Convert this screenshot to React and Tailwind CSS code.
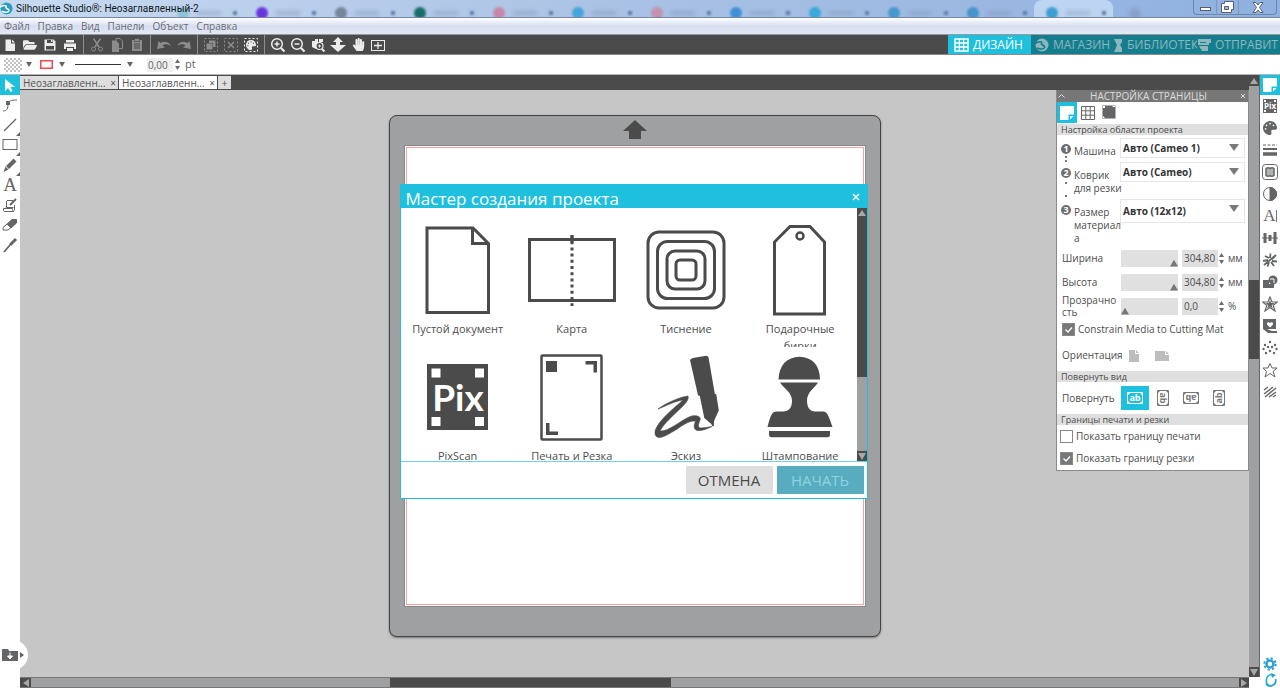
import React from 'react';
import { FaPalette, FaHandPaper, FaFolderOpen } from 'react-icons/fa';

function Svg({ w = 16, h = 16, children, className = '' }) {
  return (
    <svg width={w} height={h} viewBox={`0 0 ${w} ${h}`} fill="none" stroke="currentColor" className={`block shrink-0 ${className}`} aria-hidden="true">
      {children}
    </svg>
  );
}

function Solid({ d, w = 16, h = 16, className = '' }) {
  return (
    <Svg w={w} h={h} className={className}>
      <path d={d} fill="currentColor" stroke="none" />
    </Svg>
  );
}

const Logo = ({ size = 13, cut = '#fff' }) => (
  <svg width={size} height={size} viewBox="0 0 14 14" className="block shrink-0" aria-hidden="true">
    <circle cx="7" cy="7" r="6.500" fill="currentColor" />
    <path d="M0 5.500C4 3 7.500 3.500 6.500 5.500 5.800 7.500 10.500 7 9.500 9.500 8.500 11.500 5 11.500 2 10" fill="none" stroke={cut} strokeWidth="1.600" />
  </svg>
);

const pageIcon = 'M1 1h14v8.500H9.500V15H1zM11 11h3.500L11 14.500z';

const browserTabs = [
  'bg-[#4aa8b4]', 'bg-[#6a35dd]', 'bg-[#76869c]', 'bg-[#176f68]', 'bg-[#c887a8]', 'bg-[#45a5da]',
  'bg-[#c392ae]', 'bg-[#3d91d3]', 'bg-[#3ba9dc]', 'bg-[#4697cf]', 'bg-[#4694cb]', 'bg-[#3d9ed4]',
];

function TitleBar() {
  return (
    <header className="relative flex h-[18px] shrink-0 items-center justify-between overflow-hidden border-b border-[#75859f] bg-linear-to-r from-[#c7daf1] via-[#a9c1e4] to-[#8fb0e0]">
      <div className="absolute inset-0 flex overflow-hidden pl-[165px]" aria-hidden="true">
        {browserTabs.map((c, i) => (
          <div key={i} className={`flex w-[79px] shrink-0 items-center gap-2 rounded-t-lg pt-2 pl-3 ${i === 11 ? 'bg-[#bdd5f2]' : ''}`}>
            <i className={`size-3 rounded-full blur-[1px] ${c} ${i === 0 ? 'opacity-40' : ''}`} />
            <i className="h-1 w-6 bg-[#7d94b5]/50 blur-[2px]" />
            <i className="ml-1 size-1 bg-[#5f7da8] blur-[1px]" />
          </div>
        ))}
        <i className="mt-2 ml-4 size-3 rounded-full bg-[#86a0c8] blur-[2px]" />
      </div>
      <h1 className="relative flex items-center gap-[3px] font-[Roboto,sans-serif] text-[10px] leading-4 text-[#101820]">
        <span className="text-[#2a9cc0]"><Logo /></span>
        <span>Silhouette Studio®: Неозаглавленный-2</span>
      </h1>
      <div className="relative mr-[3px] flex h-[15px] self-start overflow-hidden rounded-b border border-t-0 border-[#6f86ab] text-[#58606e]">
        <button aria-label="Свернуть" className="flex w-[23px] items-center justify-center border-r border-[#7d95bb]">
          <Svg w={13} h={10}><rect x="1.500" y="5.500" width="10" height="3" fill="#fff" /></Svg>
        </button>
        <button aria-label="Развернуть" className="flex w-[22px] items-center justify-center border-r border-[#7d95bb]">
          <Svg w={13} h={12}><path d="M3.500.5h9v8h-2v3h-10v-9h3z" fill="#fff" /><path d="M3.500 5.500h4v3h-4z" fill="#9ab8e2" /></Svg>
        </button>
        <button aria-label="Закрыть окно" className="flex w-[37px] items-center justify-center">
          <Svg w={12} h={11}><path d="M1 .5h3l2 2.500 2-2.500h3L7.500 5.500l3.500 5H8L6 8l-2 2.500H1l3.500-5z" fill="#fff" /></Svg>
        </button>
      </div>
    </header>
  );
}

function MenuBar() {
  return (
    <nav className="flex h-[17px] shrink-0 items-center gap-2 border-b border-[#9a9a9a] bg-linear-to-b from-white via-[#d7def0] to-[#e3e8f6] pl-1 text-[10px] leading-4 text-[#6a6c72]">
      {['Файл', 'Правка', 'Вид', 'Панели', 'Объект', 'Справка'].map((m) => (
        <button key={m}>{m}</button>
      ))}
    </nav>
  );
}

const sel = <rect x="1.500" y="1.500" width="13" height="13" strokeDasharray="2 2" />;

const toolGroups = [
  [
    ['Новый', <Solid d="M3.500 2.500h5.500v4h4v7.500h-9.500zM10 2.500l3 3h-3z" />],
    ['Открыть', <FaFolderOpen size={14} />],
    ['Сохранить', <Svg><path d="M2.500 2.500h9l2 2v9h-11z" fill="currentColor" stroke="none" /><path d="M5 3h6v3H5zM4 9h8v3.500H4z" fill="#4a4b4a" stroke="none" /><path d="M9 3h1.500v2H9z" fill="currentColor" stroke="none" /></Svg>],
    ['Печать', <Svg><path d="M4 3h8v2.500H4zM2 6.500h12V12h-2v-2H4v2H2zM5 11h6v3H5z" fill="currentColor" stroke="none" /></Svg>],
  ],
  [
    ['Вырезать', <Svg><path d="M4.500 1.500 10 10M11.500 1.500 6 10" strokeWidth="1.500" /><circle cx="4.500" cy="12" r="2" /><circle cx="11.500" cy="12" r="2" /></Svg>, 1],
    ['Копировать', <Svg><path d="M7 1.500h4l2.500 2.500v7.500H7z" /><path d="M3 3.500h4l3 3V15H3z" fill="currentColor" stroke="none" /></Svg>, 1],
    ['Вставить', <Svg><path d="M3 3h10v11H3z" fill="currentColor" stroke="none" /><path d="M5.500 1.500h5v3h-5z" fill="currentColor" stroke="#4a4b4a" strokeWidth=".7" /><path d="M5 7h6M5 9h6M5 11h6" stroke="#4a4b4a" /></Svg>, 1],
  ],
  [
    ['Отменить', <Solid d="M1 12 2.500 4l2 2C8 3.500 13 4.500 15 9 11.500 6.500 8.500 7 6.500 8.500l2.500 2z" />, 1],
    ['Повторить', <Solid d="M15 12 13.500 4l-2 2C8 3.500 3 4.500 1 9c3.500-2.500 6.500-2 8.500-.5l-2.500 2z" />, 1],
  ],
  [
    ['Выделить всё', <Svg>{sel}<path d="M6 3.500h6.500V10H10V6H6z M3.500 6.500h6v6h-6z" fill="currentColor" stroke="none" /></Svg>, 1],
    ['Снять выделение', <Svg>{sel}<path d="m5 5 6 6m0-6-6 6" strokeWidth="1.500" /></Svg>, 1],
    ['Выбрать по цвету', <span className="relative block"><Svg>{sel}</Svg><FaPalette size={10} className="absolute top-[3px] left-[3px]" /></span>],
  ],
  [
    ['Увеличить', <Svg><circle cx="7" cy="7" r="5.300" strokeWidth="1.500" /><path d="m11 11 3.500 3.500" strokeWidth="2.200" /><path d="M4.500 7h5M7 4.500v5" strokeWidth="1.500" /></Svg>],
    ['Уменьшить', <Svg><circle cx="7" cy="7" r="5.300" strokeWidth="1.500" /><path d="m11 11 3.500 3.500" strokeWidth="2.200" /><path d="M4.500 7h5" strokeWidth="1.500" /></Svg>],
    ['Масштаб выделения', <Svg><path d="M2 4h3V2h3v6L6 12l-4-2zM9 2h4v3H9z" fill="currentColor" stroke="none" /><circle cx="9.500" cy="9" r="3.500" fill="#4a4b4a" strokeWidth="1.200" /><path d="M8 9h3M9.500 7.500v3" /><path d="m12 12 2.500 2.500" strokeWidth="2" /></Svg>],
    ['Масштаб перетаскиванием', <Solid d="M8 0l5 5h-3v3h6l-8 7-8-7h6V5H3z" />],
    ['Панорамирование', <FaHandPaper size={13} />],
    ['Вписать в окно', <Svg><rect x="1.500" y="3.500" width="13" height="10" /><path d="M4 8.500h8M8 5v7" strokeWidth="1.300" /></Svg>],
  ],
];

function ToolBar() {
  const modes = [
    ['МАГАЗИН', <Logo size={14} cut="#147e8e" />],
    ['БИБЛИОТЕК', <Solid w={9} h={14} d="M0 1h8v3l-2 3 2 3v4H0l3-7z" />],
    ['ОТПРАВИТ', <Solid w={14} h={13} d="M1 1h13v4h-2v2H1zM3 4v1h6V4zM2 8h9v5H5z" />],
  ];
  return (
    <div className="flex h-5 shrink-0 items-center justify-between border-b border-[#8b8b8b] bg-[#4a4b4a]">
      <div className="flex h-full items-center">
        {toolGroups.map((g, gi) => (
          <React.Fragment key={gi}>
            {gi > 0 && <i className="mx-[3px] h-full w-px bg-[#8d8e8d]" />}
            {g.map(([name, icon, dim]) => (
              <button key={name} aria-label={name} className={`flex size-5 items-center justify-center ${dim ? 'text-[#8b8c8b]' : 'text-[#ececec]'}`}>
                {icon}
              </button>
            ))}
          </React.Fragment>
        ))}
      </div>
      <div className="flex h-full text-[12px] leading-5">
        <button className="flex w-[83px] items-center gap-1 bg-[#1fc0de] pl-[6px] text-white">
          <Svg w={15} h={14}><rect x="1" y="1" width="13" height="12" strokeWidth="1.500" /><path d="M5.300 1v12M9.600 1v12M1 5h13M1 9h13" strokeWidth="1.300" /></Svg>
          ДИЗАЙН
        </button>
        {modes.map(([name, icon]) => (
          <button key={name} className="flex w-[83px] items-center gap-1 bg-[#147e8e] pl-1 text-[#8db6bd] nth-[n+3]:pl-0">
            {icon}
            <span>{name}</span>
          </button>
        ))}
      </div>
    </div>
  );
}

const Down = ({ className = 'text-[#666]' }) => <Solid w={6} h={5} d="M0 0h6L3 5z" className={className} />;

function Spinner({ label }) {
  return (
    <span className="flex flex-col gap-[3px] text-[#6a6a6a]">
      <button aria-label={`${label}: больше`}><Solid w={5} h={4} d="M0 4h5L2.500 0z" /></button>
      <button aria-label={`${label}: меньше`}><Solid w={5} h={4} d="M0 0h5L2.500 4z" /></button>
    </span>
  );
}

function OptionBar() {
  return (
    <div className="flex h-5 shrink-0 items-center border-b border-[#b5b5b5] bg-white pl-1 text-[11px] text-[#666]">
      <button aria-label="Заливка" className="flex items-center gap-1">
        <Svg w={18} h={14}>
          <path d="M0 4l4-4M0 8l8-8M0 12 12 0M2 14 16 0M6 14 18 2M10 14l8-8M14 14l4-4M0 10l4 4M0 6l8 8M0 2l12 12M2 0l14 14M6 0l12 12M10 0l8 8M14 0l4 4" stroke="#b0b0b0" strokeWidth=".8" />
        </Svg>
        <Down />
      </button>
      <button aria-label="Цвет линии" className="ml-2 flex items-center gap-[6px]">
        <Svg w={13} h={9}><rect x=".75" y=".75" width="11.500" height="7.500" stroke="#f04a4a" strokeWidth="1.500" /></Svg>
        <Down />
      </button>
      <button aria-label="Стиль линии" className="ml-[10px] flex items-center gap-[6px]">
        <i className="h-px w-[46px] bg-[#333]" />
        <Down />
      </button>
      <input aria-label="Толщина линии" defaultValue="0,00" className="mr-[2px] ml-[14px] h-[14px] w-[26px] bg-[#efefef] pl-px text-[10px] leading-4 outline-none" />
      <Spinner label="Толщина" />
      <span className="ml-[5px]">pt</span>
    </div>
  );
}

const leftTools = [
  ['Выбор', <Solid d="M3 2v12l3-3 2.500 4 2-1-2-4H13z" />],
  ['Правка узлов', <Svg><path d="M1 14c4 0 5-2 5-8 2-3 5-3 9-3" /><rect x="4" y="4" width="4" height="4" fill="currentColor" stroke="none" /></Svg>],
  ['Линия', <Svg><path d="m2 14 12-12" strokeWidth="1.200" /></Svg>, 1],
  ['Прямоугольник', <Svg><rect x="1" y="2.500" width="14" height="10" /></Svg>, 1],
  ['Карандаш', <Solid d="M11.500 1.500l3 3L7 12l-3-3zM3.500 9.500l3 3L1.500 15z" />, 1],
  ['Текст', <span className="font-['Liberation_Serif',serif] text-[19px] leading-5">A</span>],
  ['Эскиз', <Svg><path d="M5 3.500h6M4.500 4v6.500h7M12.500 8v4.500c0 2-2 2-2 0v-1h-9v1.500c0 1.500 1 1.500 1 1.500h9.500M4.500 10.500l-1 .5" /><path d="m8 8 6-6" strokeWidth="2" /></Svg>],
  ['Ластик', <Svg><path d="M10 2.500h4.500v3.500L9 11 5 7z" fill="currentColor" /><path d="M5 7 1 10.500V13h5l3-2.500z" /></Svg>],
  ['Нож', <Svg><path d="m8 8 6-6" strokeWidth="3" /><path d="m2 15 6-7" strokeWidth="1.800" /></Svg>],
];

function LeftTools() {
  return (
    <aside className="flex w-5 shrink-0 flex-col bg-white text-[#646566]">
      {leftTools.map(([name, icon, more], i) => (
        <button key={name} aria-label={name} className={`relative flex size-5 shrink-0 items-center justify-center ${i === 0 ? 'bg-[#1fc0de] text-white' : ''}`}>
          {icon}
          {more && <Solid w={4} h={4} d="M4 0v4H0z" className="absolute right-0 -bottom-px" />}
        </button>
      ))}
      <button aria-label="Показать библиотеку" className="relative z-10 mt-auto mb-[18px] flex h-[30px] w-7 items-center gap-[2px] rounded-r-full bg-white pl-[2px]">
        <Svg><path d="M0 2h6l1 2h9v10H0z" fill="currentColor" stroke="none" /><path d="M8 5.500v4M5.500 9 8 12l2.500-3z" fill="#fff" stroke="#fff" /></Svg>
        <Solid w={4} h={6} d="M0 0v6l4-3z" />
      </button>
    </aside>
  );
}

const star = 'M8 1l2 5h5.500l-4.300 3.300L13 15 8 11.500 3 15l1.800-5.700L.5 6H6z';

const rightTools = [
  ['Параметры страницы', <Solid d={pageIcon} />],
  ['PixScan', <Svg><rect x="1" y="1" width="14" height="14" fill="currentColor" stroke="none" /><path d="M2 2h2v2H2zM12 2h2v2h-2zM2 12h2v2H2zM12 12h2v2h-2z" fill="#fff" stroke="none" /><text x="8" y="11" textAnchor="middle" fontSize="8" fontWeight="700" fill="#fff" stroke="none">Pix</text></Svg>],
  ['Заливка', <FaPalette size={14} />],
  ['Стиль линии', <Svg><path d="M1 3h14" strokeDasharray="3 1.500" /><path d="M1 7h14" strokeWidth="2" /><path d="M1 12h14" strokeWidth="3.500" /></Svg>],
  ['Трассировка', <Svg><rect x=".5" y=".5" width="15" height="15" rx="3" /><path d="M4 4.500q2-1.500 4 0 2-1.500 4 0v7q-2 1.500-4 0-2 1.500-4 0z" fill="currentColor" fillOpacity=".5" strokeWidth="1.500" /></Svg>],
  ['Эффекты', <Svg><circle cx="8" cy="8" r="6.500" /><path d="M8 1.500a6.500 6.500 0 010 13z" fill="currentColor" /></Svg>],
  ['Стиль текста', <span className="flex items-center font-['Liberation_Serif',serif] text-[17px] leading-5">A<i className="h-3 w-px bg-[#777]" /></span>],
  ['Преобразование', <Svg><path d="M0 8h16" /><path d="M3 3v10M13 2v12" strokeWidth="3" /><path d="M8 5v6" strokeWidth="3" /></Svg>],
  ['Повторение', <Svg><path d="m7 6-4-2M8 6l.5-4.500M10 7l4-4M10 9l5 .5M9 10l3 4M7 10l-1.500 4.500M6 8l-5 1M2 13 14 3" strokeWidth="1.800" /></Svg>],
  ['Модификация', <Svg><circle cx="11" cy="6" r="4.500" fill="currentColor" stroke="none" /><path d="M1 6h6v4h5v4H1z" fill="currentColor" stroke="none" /><path d="M8 5h4v4" stroke="#fff" /></Svg>],
  ['Смещение', <Svg><path d={star} strokeWidth="1.200" /><path d="m8 4 1.200 3h3.300L9.800 9.200l1 3.300L8 10.500l-2.800 2 1-3.300L3.500 7h3.300z" fill="currentColor" stroke="none" /></Svg>],
  ['Библиотека', <Svg><path d="M1 1h13v10H5l5 2h5v2H6L1 11z" fill="currentColor" stroke="none" /><path d="M8 9.500 5 6.500C4.500 4 7 3.500 8 5c1-1.500 3.500-1 3 1.500z" fill="#fff" stroke="none" /></Svg>],
  ['Стразы', <Svg>{[[8, 2], [3, 5], [13, 5], [1.5, 9], [14.5, 9], [6, 7], [10, 7], [4, 13], [8, 11], [12, 13]].map(([x, y]) => <circle key={`${x}-${y}`} cx={x} cy={y} r="1.200" fill="currentColor" stroke="none" />)}</Svg>],
  ['Эскиз', <Svg><path d="m8 1.500 2 4.500h5l-4 3.500L13 15l-5-3.500L3 15l1.500-5.500L1 6h5z" /></Svg>],
  ['Штриховка', <Svg><path d="m2 6 4-3M2 10l9-7M3 13 14 4M7 13l7-5M11 13l3-2" strokeWidth="1.400" /></Svg>],
];

function RightRail() {
  return (
    <aside className="flex w-5 shrink-0 flex-col items-center bg-white text-[#646566]">
      {rightTools.map(([name, icon], i) => (
        <button key={name} aria-label={name} className={`flex w-5 shrink-0 items-center justify-center ${i === 0 ? 'h-5 bg-[#1fc0de] text-white' : 'h-[22px]'}`}>
          {icon}
        </button>
      ))}
      <div className="mt-auto flex flex-col gap-[2px] pb-px text-[#2a9fd0]">
        <button aria-label="Настройки">
          <Svg w={14} h={14}><circle cx="7" cy="7" r="3.500" strokeWidth="2.500" /><circle cx="7" cy="7" r="5.700" strokeWidth="2" strokeDasharray="2.200 2.270" /></Svg>
        </button>
        <button aria-label="Тема">
          <Svg w={14} h={14}><path d="M9 1.500A6 6 0 007 13" stroke="#25b4cf" strokeWidth="1.700" /><path d="M3 11A5.500 5.500 0 0012.500 6" strokeWidth="1.700" /><path d="M8 0l5 2-4 3z" fill="currentColor" stroke="none" /></Svg>
        </button>
      </div>
    </aside>
  );
}

function DocTabs() {
  return (
    <div className="flex h-[15px] shrink-0 bg-[#4a4b4a] text-[10px] leading-[14px] text-[#555]">
      {[0, 1].map((i) => (
        <div key={i} className={`my-px mr-px flex w-[98px] items-center justify-between pr-[2px] pl-[3px] ${i ? 'bg-white' : 'bg-[#dedede]'}`}>
          <button>Неозаглавленн...</button>
          <button aria-label="Закрыть вкладку">×</button>
        </div>
      ))}
      <button aria-label="Новая вкладка" className="my-px w-[13px] bg-[#dedede]">+</button>
    </div>
  );
}

function SectionTitle({ children }) {
  return <h3 className="h-[11px] bg-[#dfdfdf] pl-1 text-[9px] leading-[11px] text-[#4a4a4a]">{children}</h3>;
}

function MachineRow({ n, lines, value, id, rowClass, selectClass, dots }) {
  return (
    <div className={`flex ${rowClass}`}>
      <span className="flex w-[13px] shrink-0 flex-col items-center pt-[6px] pr-[3px]">
        <b className="size-[10px] rounded-full bg-[#6d6e70] text-center text-[9px] leading-[10px] text-white">{n}</b>
        {dots && <i className={`flex grow flex-col items-center ${dots}`}><i className="size-[2px] bg-[#777]" /><i className="size-[2px] bg-[#777]" /></i>}
      </span>
      <label htmlFor={id} className="w-[46px] shrink-0 pt-[7px] text-[10px] leading-[13px] whitespace-nowrap">
        {lines.map((l) => <span key={l} className="block">{l}</span>)}
      </label>
      <span className="relative mr-[3px] block grow">
        <select id={id} className={`block w-full appearance-none border border-[#e6e6e6] bg-white pl-[2px] text-[10px] font-bold text-[#333] outline-none ${selectClass}`}>
          <option>{value}</option>
        </select>
        <Solid w={10} h={7} d="M0 0h10L5 7z" className="pointer-events-none absolute top-[6px] right-[6px] text-[#7a7a7a]" />
      </span>
    </div>
  );
}

function SliderRow({ label, value, unit, pos, id }) {
  return (
    <div className="flex h-6 items-center pl-[5px]">
      <label htmlFor={id} className="w-[59px] shrink-0 text-[10px] leading-3 wrap-anywhere">{label}</label>
      <input id={id} type="range" defaultValue={pos} className="h-[17px] w-[57px] appearance-none bg-[#e0e0e0] [&::-webkit-slider-thumb]:h-[17px] [&::-webkit-slider-thumb]:w-[8px] [&::-webkit-slider-thumb]:appearance-none [&::-webkit-slider-thumb]:bg-[#777] [&::-webkit-slider-thumb]:[clip-path:polygon(50%_60%,100%_100%,0_100%)]" />
      <input aria-label={`${label}, значение`} defaultValue={value} className="mr-px ml-1 h-[17px] w-9 bg-[#e0e0e0] pl-[2px] text-[10px] outline-none" />
      <Spinner label={label} />
      <span className="ml-1 text-[10px]">{unit}</span>
    </div>
  );
}

function Check({ label, on, className }) {
  return (
    <label className={`flex h-[22px] items-center gap-[3px] text-[10px] ${className}`}>
      <span className="relative block size-[13px]">
        <input type="checkbox" defaultChecked={on} className="block size-[13px] appearance-none border border-[#888] bg-white checked:bg-[#77787a]" />
        {on && <Svg w={13} h={13} className="pointer-events-none absolute inset-0 text-white"><path d="m3.500 6.500 2.500 2.500 4-4.500" strokeWidth="1.300" /></Svg>}
      </span>
      {label}
    </label>
  );
}

function RotIcon({ rot }) {
  return (
    <svg width="18" height="18" viewBox="0 0 18 18" className={`block ${rot}`} aria-hidden="true">
      <path d="M1.500 3.500h15v11h-15z" fill="none" stroke="currentColor" />
      <path d="M2 4h2L2 6zM16 4h-2l2 2zM2 14h2l-2-2zM16 14h-2l2-2z" fill="currentColor" />
      <text x="9" y="12" textAnchor="middle" fontSize="9" fontWeight="700" fill="currentColor">ab</text>
    </svg>
  );
}

function PagePanel() {
  return (
    <section className="absolute top-[15px] right-0 w-[193px] border-x border-b border-[#8a8a8a] bg-white pb-px text-[#4d4d4d]">
      <header className="flex h-3 items-center justify-between bg-[#777] pr-[2px] pl-px text-[10px] leading-3 text-[#dcdcdc]">
        <button aria-label="Свернуть панель"><Svg w={7} h={4}><path d="m.5 3.500 3-3 3 3" /></Svg></button>
        <h2 className="pr-2">НАСТРОЙКА СТРАНИЦЫ</h2>
        <button aria-label="Закрыть панель"><Svg w={6} h={6}><path d="m1 1 4 4m0-4-4 4" /></Svg></button>
      </header>
      <div className="flex h-[22px] text-[#646566]">
        <button aria-label="Страница" className="flex h-[21px] w-5 items-center justify-center bg-[#1fc0de] text-white"><Solid d={pageIcon} /></button>
        <button aria-label="Сетка" className="flex h-[21px] w-[22px] items-center justify-center"><Svg><path d="M1.500 1.500h13v13h-13zM5.800 1.500v13M10.200 1.500v13M1.500 5.800h13M1.500 10.200h13" /></Svg></button>
        <button aria-label="Метки" className="flex h-[21px] w-5 items-center justify-center"><Svg w={14} h={15}><rect x="1" y="1" width="12" height="12" fill="currentColor" /><path d="M1 1h2v2H1zM10 1h3v1h-2zM1 11v2h2" fill="#fff" stroke="none" /></Svg></button>
      </div>
      <SectionTitle>Настройка области проекта</SectionTitle>
      <div className="pt-[2px] pl-1">
        <MachineRow id="machine" n="1" lines={['Машина']} value="Авто (Cameo 1)" rowClass="h-6 pt-px" selectClass="h-5" dots="gap-[2px] pt-[2px]" />
        <MachineRow id="mat" n="2" lines={['Коврик', 'для резки']} value="Авто (Cameo)" rowClass="h-[37px] pt-px" selectClass="h-5" dots="justify-between pt-1 pb-px" />
        <MachineRow id="media" n="3" lines={['Размер', 'материал', 'а']} value="Авто (12x12)" rowClass="h-12 pt-px" selectClass="h-6" />
      </div>
      <SliderRow id="w" label="Ширина" value="304,80" unit="мм" pos={100} />
      <SliderRow id="h" label="Высота" value="304,80" unit="мм" pos={100} />
      <SliderRow id="o" label="Прозрачность" value="0,0" unit="%" pos={0} />
      <Check className="pl-[5px]" label="Constrain Media to Cutting Mat" on />
      <div className="flex h-[31px] items-center pl-[5px] text-[10px] text-[#4d4d4d]">
        <span className="w-[66px]">Ориентация</span>
        <button aria-label="Книжная" className="text-[#bdbdbd]"><Solid w={12} h={14} d="M1 1h6v4h4v8H1zM8 1l3 3H8z" /></button>
        <button aria-label="Альбомная" className="ml-[15px] text-[#bdbdbd]"><Solid w={14} h={12} d="M0 1h10v4h4v6H0zM11 1l3 3h-3z" /></button>
      </div>
      <SectionTitle>Повернуть вид</SectionTitle>
      <div className="flex h-8 items-center pl-[5px] text-[10px]">
        <span className="w-[59px]">Повернуть</span>
        <button aria-label="0°" className="flex h-6 w-7 items-center justify-center bg-[#1fc0de] text-white"><RotIcon rot="" /></button>
        <button aria-label="90°" className="flex w-7 justify-center text-[#777]"><RotIcon rot="rotate-90" /></button>
        <button aria-label="180°" className="flex w-7 justify-center text-[#777]"><RotIcon rot="rotate-180" /></button>
        <button aria-label="270°" className="flex w-7 justify-center text-[#777]"><RotIcon rot="-rotate-90" /></button>
      </div>
      <SectionTitle>Границы печати и резки</SectionTitle>
      <Check className="pl-[3px]" label="Показать границу печати" />
      <Check className="pl-[3px]" label="Показать границу резки" on />
    </section>
  );
}

const projects = [
  ['Пустой документ', <g strokeWidth="3"><path d="M19 8h46l15.500 15.500v69H19z" /><path d="M64.500 8v15.500h16" /></g>],
  ['Карта', <g strokeWidth="3"><rect x="7.500" y="19.500" width="85" height="61" /><path d="M50 15v71" strokeDasharray="3 3.200" /><path d="M50 15v8" /></g>],
  ['Тиснение', <g strokeWidth="3"><rect x="12" y="12" width="76" height="76" rx="11" /><rect x="21.500" y="21.500" width="57" height="57" rx="10" /><rect x="31" y="31" width="38" height="38" rx="8" /><rect x="40" y="40" width="20" height="20" rx="4" /></g>],
  ['Подарочные бирки', <g><path d="M40 6.500h20L74.500 22v72h-50V22z" strokeWidth="3" /><circle cx="50" cy="16" r="3.500" strokeWidth="2.500" /></g>],
  ['PixScan', <g stroke="none"><path d="M19 17h61v66H19z" fill="currentColor" /><path d="M23.500 21.500h9v9h-9zM67 21.500h9v9h-9zM23.500 70h9v9h-9zM67 70h9v9h-9z" fill="#fff" /><text x="50" y="64" textAnchor="middle" fontSize="37" fontWeight="700" fontFamily="Lato" fill="#fff">Pix</text></g>],
  ['Печать и Резка', <g><rect x="19.500" y="8.500" width="60" height="84" rx="1" strokeWidth="2.500" /><path d="M24 14h11v11H24zM63.500 14H75v11.500h-3.500v-8h-8zM24 76h3.500v8.500H36V88H24z" fill="currentColor" stroke="none" /></g>],
  ['Эскиз', <g><path d="M54 13q1-1.500 3-2l13-2.300q2 0 2.500 1.500l6.300 36.500 1.500.8 2.500 16-4.800 10.500-.2 5.500-1.500-.5-1-2-7-6-4.500-22-1.800-.8z" fill="currentColor" stroke="none" /><path d="M22 62C30 56 44 50 52 49c1 2.500-1 6-5 10-9 9-19 17-23 25 8 1 20-10 29-14 6-3 13-.5 11 3-1 3-3 7 0 8 4 0 8-1 12-1.500C71 82 66 84 61 83.500c-4-1.500-3-6-1.500-9-4-2-12 3-19 8-7 4-13 8-17 8-5 0-5-5-4-8C24 72 37 62 47 53c-8 1-17 6-25 9z" fill="currentColor" stroke="currentColor" strokeWidth=".6" /></g>],
  ['Штампование', <path d="M28.500 32.500C29 18 37 10 49.500 9.700 62 10 70 18 70 32.500zM30 35.500h38c-4 6-11 10-11 18 0 7 3 11 8 11h7c5 0 6 2 10.500 15.500h-65C21 67 22 64.500 27 64.500h6c6 0 9-4 9-11 0-8-8-12-12-18zM19 84h61v4q0 2.300-2.500 2.300H21.500Q19 90.300 19 88z" fill="currentColor" stroke="none" />],
];

function ProjectWizard() {
  return (
    <section role="dialog" aria-label="Мастер создания проекта" className="mx-auto w-[468px] border border-[#1fc0de] bg-white">
      <header className="flex h-[23px] items-center justify-between overflow-hidden bg-[#1fc0de] pr-[7px] pl-[5px] text-white">
        <h2 className="pt-1 text-[17px] leading-6">Мастер создания проекта</h2>
        <button aria-label="Закрыть"><Svg w={8} h={8}><path d="m1 1 6 6m0-6-6 6" strokeWidth="1.500" /></Svg></button>
      </header>
      <div className="flex h-[254px] border-b border-[#6bd3e4]">
        <div className="grid grow grid-cols-4 content-start overflow-hidden pt-3">
          {projects.map(([name, art]) => (
            <button key={name} className="flex h-[127px] flex-col items-center overflow-hidden px-3 text-[11px] leading-[17px] text-[#4d4d4d]">
              <Svg w={100} h={100} className="text-[#4a4b4a]">{art}</Svg>
              <span className="whitespace-nowrap">
                {name === 'Подарочные бирки' ? <>Подарочные<br />бирки</> : name}
              </span>
            </button>
          ))}
        </div>
        <div className="flex w-[10px] flex-col bg-[#9fa0a2]">
          <div className="flex h-[169px] justify-center bg-[#4a4b4a] pt-[2px] text-[#a8a8a8]"><Solid w={8} h={6} d="M0 6h8L4 0z" /></div>
          <div className="mt-auto flex h-[10px] items-center justify-center bg-[#4a4b4a] text-[#a8a8a8]"><Solid w={8} h={7} d="M0 0h8L4 7z" /></div>
        </div>
      </div>
      <footer className="flex h-[36px] items-center justify-end gap-1 pr-[3px] text-[15px]">
        <button className="h-7 w-[87px] bg-[#dedede] text-[#4a4b4a]">ОТМЕНА</button>
        <button className="h-7 w-[87px] bg-[#57adbf] text-[#8ed4e0]">НАЧАТЬ</button>
      </footer>
    </section>
  );
}

function Mat() {
  return (
    <div className="flex h-[522px] w-[492px] shrink-0 flex-col items-center rounded-lg border border-[#444] bg-[#9fa0a2] shadow-[0_1px_2px_#777]">
      <div className="flex h-[29px] items-start pt-1 text-[#4a4b4a]">
        <Solid w={24} h={20} d="M12 0l12 11h-6v8H6v-8H0z" />
      </div>
      <div className="h-[462px] w-[462px] border border-[#888] bg-white p-px">
        <div className="h-full border border-[#f5a3a3]" />
      </div>
    </div>
  );
}

export default function App() {
  return (
    <div className="flex min-h-screen flex-col bg-white font-['Open_Sans','Noto_Sans',sans-serif]">
      <TitleBar />
      <MenuBar />
      <ToolBar />
      <OptionBar />
      <div className="flex grow">
        <LeftTools />
        <div className="flex min-w-0 grow flex-col">
          <div className="flex grow">
            <main className="relative flex min-w-0 grow flex-col bg-[#c6c6c6]">
              <DocTabs />
              <div className="flex grow justify-center pt-[25px] pb-10">
                <Mat />
              </div>
              <div className="absolute inset-x-0 top-[109px] pr-[2px]">
                <ProjectWizard />
              </div>
              <PagePanel />
            </main>
            <div className="flex w-[11px] shrink-0 flex-col border-r border-[#666] bg-[#9fa0a2] text-[#a8a8a8]">
              <div className="flex h-[11px] items-center justify-center bg-[#4a4b4a]"><Solid w={8} h={6} d="M0 6h8L4 0z" /></div>
              <div className="mt-[194px] h-[79px] bg-[#4a4b4a]" />
              <div className="mt-auto flex h-[10px] items-center justify-center bg-[#4a4b4a]"><Solid w={8} h={7} d="M0 0h8L4 7z" /></div>
            </div>
          </div>
          <div className="mr-[11px] flex h-[11px] shrink-0 items-stretch justify-between border-y border-[#777] bg-[#9fa0a2] text-[#a8a8a8]">
            <div className="flex w-[11px] items-center justify-center bg-[#4a4b4a]"><Solid w={6} h={8} d="M6 0v8L0 4z" /></div>
            <div className="mr-[568px] ml-[359px] grow bg-[#4a4b4a]" />
            <div className="flex w-[10px] items-center justify-center bg-[#4a4b4a]"><Solid w={6} h={8} d="M0 0v8l6-4z" /></div>
          </div>
        </div>
        <RightRail />
      </div>
    </div>
  );
}
